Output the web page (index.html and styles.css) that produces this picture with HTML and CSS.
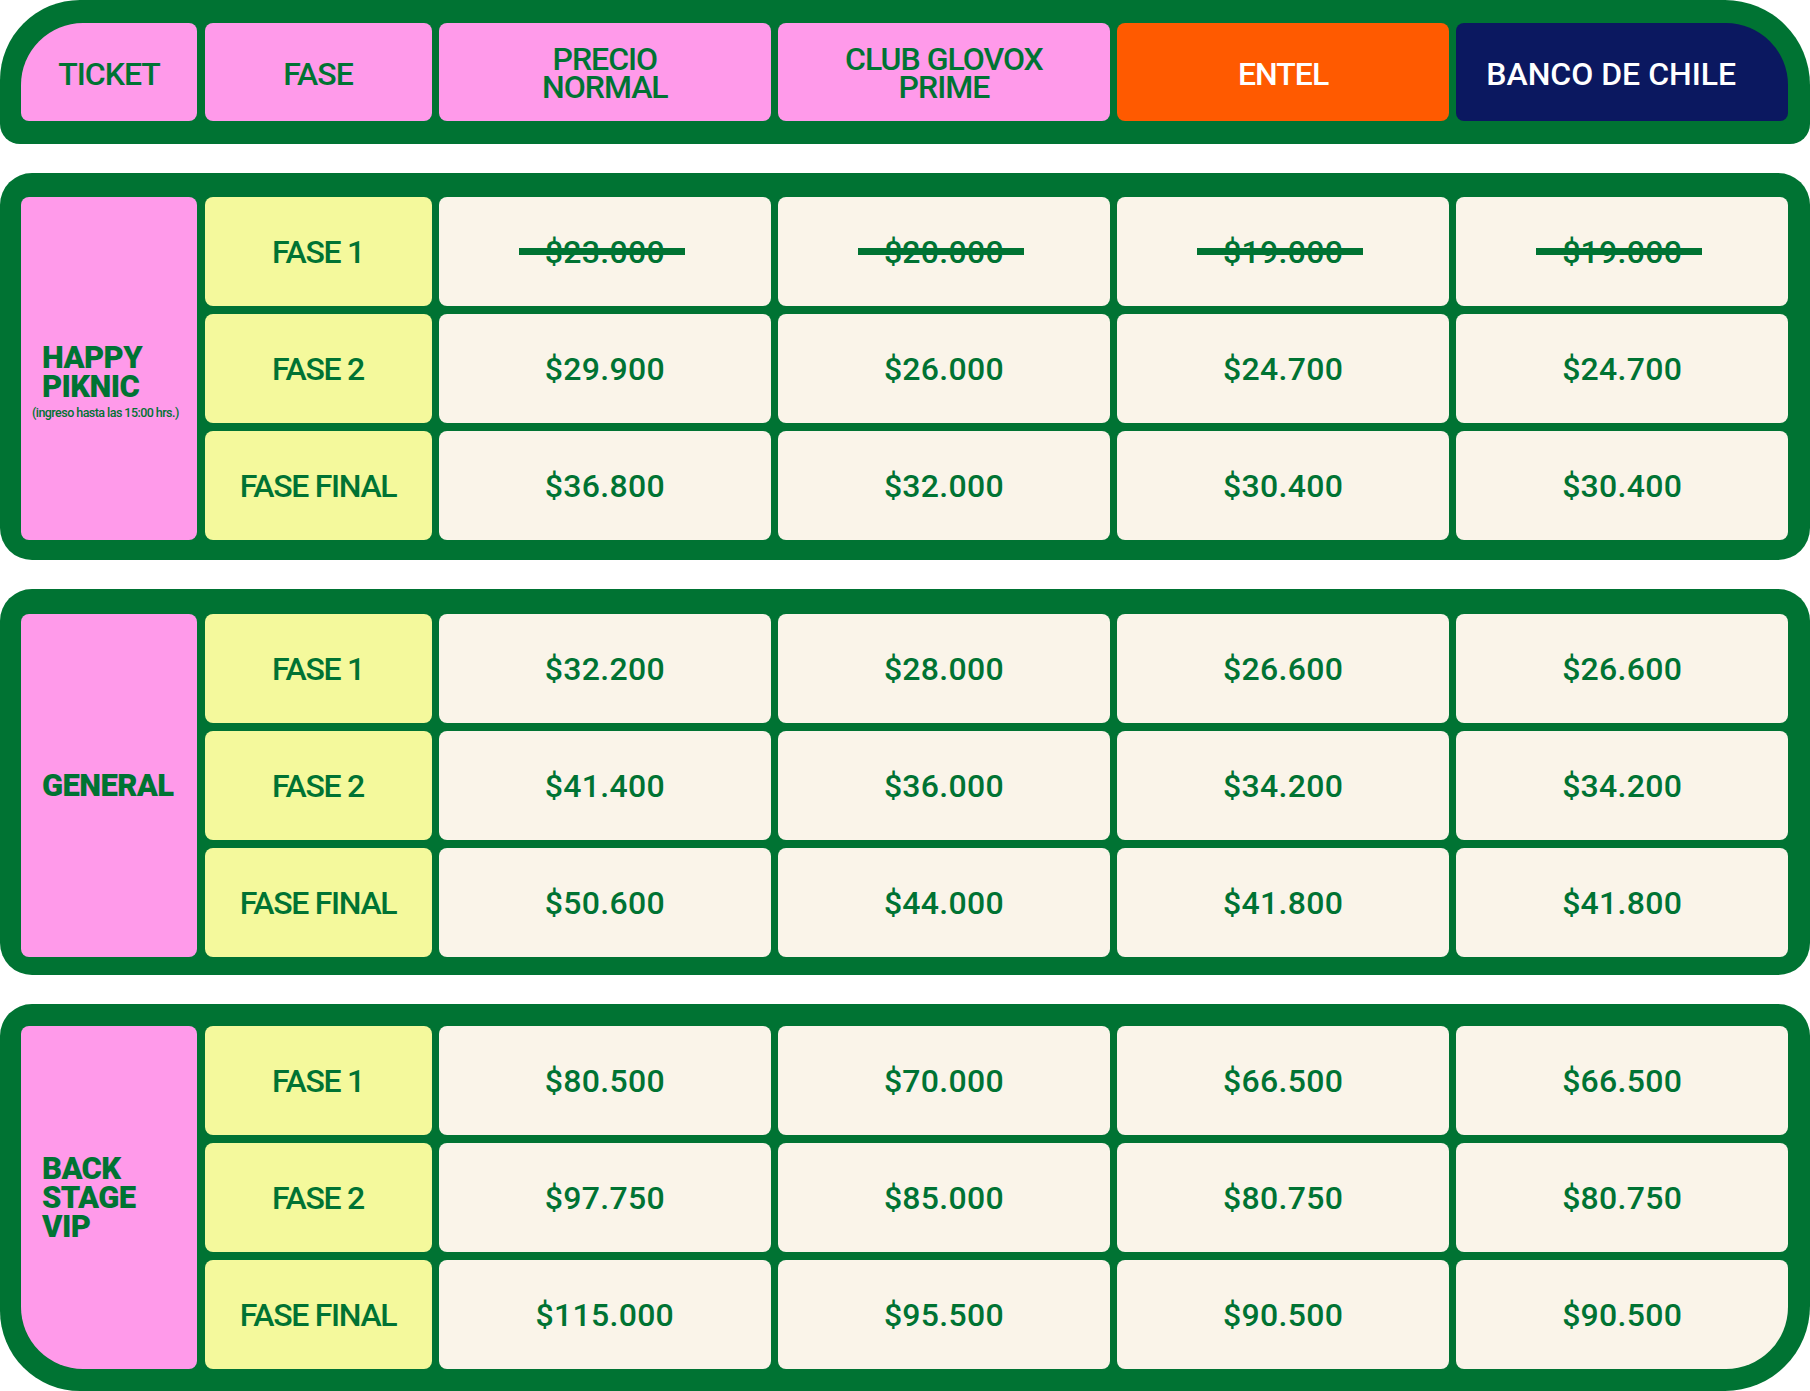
FILE: index.html
```html
<!DOCTYPE html>
<html lang="es">
<head>
<meta charset="utf-8">
<title>Precios tickets</title>
<link rel="stylesheet" href="styles.css">
</head>
<body>
<div class="board">
  <div class="panel panel-head">
    <div class="cell head head-ticket">TICKET</div>
    <div class="cell head">FASE</div>
    <div class="cell head head-two">PRECIO<br>NORMAL</div>
    <div class="cell head head-two">CLUB GLOVOX<br>PRIME</div>
    <div class="cell head head-entel">ENTEL</div>
    <div class="cell head head-banco">BANCO DE CHILE</div>
  </div>

  <div class="panel panel-section sec-1">
    <div class="cell ticket ticket-happy">
      <div class="ticket-name">HAPPY<br>PIKNIC</div>
      <div class="ticket-note">(ingreso hasta las 15:00 hrs.)</div>
    </div>
    <div class="cell fase">FASE 1</div>
    <div class="cell price"><span class="strike">$23.000</span></div>
    <div class="cell price"><span class="strike">$20.000</span></div>
    <div class="cell price"><span class="strike">$19.000</span></div>
    <div class="cell price"><span class="strike">$19.000</span></div>
    <div class="cell fase">FASE 2</div>
    <div class="cell price">$29.900</div>
    <div class="cell price">$26.000</div>
    <div class="cell price">$24.700</div>
    <div class="cell price">$24.700</div>
    <div class="cell fase">FASE FINAL</div>
    <div class="cell price">$36.800</div>
    <div class="cell price">$32.000</div>
    <div class="cell price">$30.400</div>
    <div class="cell price">$30.400</div>
  </div>

  <div class="panel panel-section sec-2">
    <div class="cell ticket">
      <div class="ticket-name">GENERAL</div>
    </div>
    <div class="cell fase">FASE 1</div>
    <div class="cell price">$32.200</div>
    <div class="cell price">$28.000</div>
    <div class="cell price">$26.600</div>
    <div class="cell price">$26.600</div>
    <div class="cell fase">FASE 2</div>
    <div class="cell price">$41.400</div>
    <div class="cell price">$36.000</div>
    <div class="cell price">$34.200</div>
    <div class="cell price">$34.200</div>
    <div class="cell fase">FASE FINAL</div>
    <div class="cell price">$50.600</div>
    <div class="cell price">$44.000</div>
    <div class="cell price">$41.800</div>
    <div class="cell price">$41.800</div>
  </div>

  <div class="panel panel-section sec-3">
    <div class="cell ticket ticket-last">
      <div class="ticket-name">BACK<br>STAGE<br>VIP</div>
    </div>
    <div class="cell fase">FASE 1</div>
    <div class="cell price">$80.500</div>
    <div class="cell price">$70.000</div>
    <div class="cell price">$66.500</div>
    <div class="cell price">$66.500</div>
    <div class="cell fase">FASE 2</div>
    <div class="cell price">$97.750</div>
    <div class="cell price">$85.000</div>
    <div class="cell price">$80.750</div>
    <div class="cell price">$80.750</div>
    <div class="cell fase">FASE FINAL</div>
    <div class="cell price">$115.000</div>
    <div class="cell price">$95.500</div>
    <div class="cell price">$90.500</div>
    <div class="cell price price-last">$90.500</div>
  </div>
</div>
</body>
</html>
```

FILE: styles.css
```css
html, body {
  margin: 0;
  padding: 0;
  background: #ffffff;
}

body {
  font-family: Roboto, "Liberation Sans", sans-serif;
  color: #007333;
}

.board {
  width: 1810px;
}

.panel {
  display: grid;
  grid-template-columns: 176px 227px repeat(4, 1fr);
  column-gap: 7.5px;
  row-gap: 8px;
  background: #007333;
  box-sizing: border-box;
  width: 1810px;
  padding-left: 21px;
  padding-right: 22px;
}

.panel-head {
  grid-template-rows: 98px;
  padding-top: 23px;
  padding-bottom: 23px;
  border-radius: 80px 85px 20px 20px;
}

.panel-section {
  grid-template-rows: repeat(3, 109px);
  margin-top: 29px;
  border-radius: 32px;
}

.sec-1 {
  padding-top: 24px;
  padding-bottom: 20px;
}

.sec-2 {
  padding-top: 25px;
  padding-bottom: 18px;
}

.sec-3 {
  padding-top: 22px;
  padding-bottom: 22px;
  border-radius: 32px 32px 85px 80px;
}

.cell {
  border-radius: 8px;
  display: flex;
  align-items: center;
  justify-content: center;
  text-align: center;
}

.head {
  background: #ff9aea;
  font-size: 32px;
  font-weight: 500;
  letter-spacing: -1px;
  line-height: 28px;
  padding-top: 3px;
}

.head-two {
  padding-top: 1px;
}

.head-ticket {
  border-top-left-radius: 62px;
}

.head-entel {
  background: #ff5a00;
  color: #ffffff;
}

.head-banco {
  background: #0b1860;
  color: #ffffff;
  border-top-right-radius: 62px;
  letter-spacing: 0;
  padding-right: 22px;
}

.ticket {
  grid-row: span 3;
  background: #ff9aea;
  flex-direction: column;
  align-items: flex-start;
  justify-content: center;
  padding-left: 21px;
  text-align: left;
}

.ticket-name {
  font-size: 31px;
  font-weight: 900;
  letter-spacing: -0.6px;
  line-height: 29px;
}

.ticket-happy {
  padding-top: 26px;
}

.ticket-note {
  margin-left: -10px;
  margin-top: 4px;
  font-size: 12.5px;
  font-weight: 500;
  letter-spacing: -0.55px;
  white-space: nowrap;
}

.ticket-last {
  border-bottom-left-radius: 62px;
}

.fase {
  background: #f4f99c;
  font-size: 32px;
  font-weight: 500;
  letter-spacing: -1.3px;
}

.price {
  background: #faf4e9;
  font-size: 32px;
  font-weight: 500;
  letter-spacing: 0.3px;
}

.price-last {
  border-bottom-right-radius: 62px;
}

.strike {
  position: relative;
  line-height: 32px;
}

.strike::after {
  content: "";
  position: absolute;
  left: -26px;
  right: -20px;
  top: calc(50% - 4px);
  height: 7px;
  background: #007333;
}
```
